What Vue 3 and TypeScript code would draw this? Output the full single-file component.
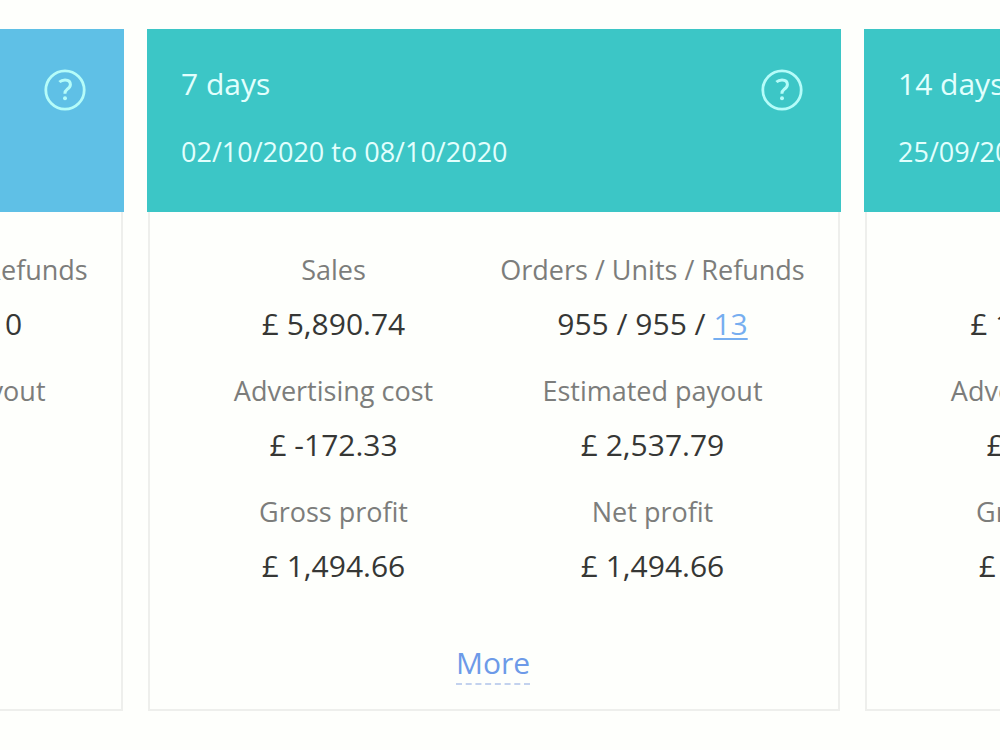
<script setup lang="ts">
interface Metric {
  label: string
  value: string
  linked?: string
}

interface PeriodCard {
  title: string
  range: string
  tone: 'sky' | 'teal'
  metrics: Metric[]
}

const cards: PeriodCard[] = [
  {
    title: 'Yesterday',
    range: '08/10/2020',
    tone: 'sky',
    metrics: [
      { label: 'Sales', value: '£ 841.53' },
      { label: 'Orders / Units / Refunds', value: '136 / 136 / 0' },
      { label: 'Advertising cost', value: '£ -24.61' },
      { label: 'Estimated payout', value: '£ 362.54' },
      { label: 'Gross profit', value: '£ 213.52' },
      { label: 'Net profit', value: '£ 213.52' },
    ],
  },
  {
    title: '7 days',
    range: '02/10/2020 to 08/10/2020',
    tone: 'teal',
    metrics: [
      { label: 'Sales', value: '£ 5,890.74' },
      { label: 'Orders / Units / Refunds', value: '955 / 955 / ', linked: '13' },
      { label: 'Advertising cost', value: '£ -172.33' },
      { label: 'Estimated payout', value: '£ 2,537.79' },
      { label: 'Gross profit', value: '£ 1,494.66' },
      { label: 'Net profit', value: '£ 1,494.66' },
    ],
  },
  {
    title: '14 days',
    range: '25/09/2020 to 08/10/2020',
    tone: 'teal',
    metrics: [
      { label: 'Sales', value: '£ 11,781.48' },
      { label: 'Orders / Units / Refunds', value: '1910 / 1910 / ', linked: '26' },
      { label: 'Advertising cost', value: '£ -344.66' },
      { label: 'Estimated payout', value: '£ 5,075.58' },
      { label: 'Gross profit', value: '£ 2,989.32' },
      { label: 'Net profit', value: '£ 2,989.32' },
    ],
  },
]
</script>

<template>
  <main class="strip">
    <article v-for="card in cards" :key="card.title" class="card">
      <header class="head" :class="card.tone">
        <div class="heading">
          <h2 class="title">{{ card.title }}</h2>
          <p class="range">{{ card.range }}</p>
        </div>
        <button class="help" type="button" :aria-label="'Help: ' + card.title">
          <svg viewBox="0 0 42 42" width="42" height="42" fill="none" aria-hidden="true">
            <circle cx="21" cy="21" r="19.2" stroke="currentColor" stroke-width="2.8" />
            <path
              d="M15.4 13C17 11.5 18.9 10.9 21 10.9C24.4 10.9 26.4 12.6 26.4 15.4C26.4 17.7 25.2 18.8 23.2 20.2C21.4 21.5 20.9 22.4 20.9 24.8"
              stroke="currentColor"
              stroke-width="3"
            />
            <circle cx="21" cy="29.2" r="2" fill="currentColor" />
          </svg>
        </button>
      </header>
      <div class="body">
        <dl class="metrics">
          <div v-for="metric in card.metrics" :key="metric.label" class="metric">
            <dt class="label">{{ metric.label }}</dt>
            <dd class="value">{{ metric.value }}<a v-if="metric.linked" class="count" href="#refunds">{{ metric.linked }}</a></dd>
          </div>
        </dl>
        <a class="more" href="#more">More</a>
      </div>
    </article>
  </main>
</template>

<style>
body {
  margin: 0;
  background: #fefffc;
}
</style>

<style scoped>
.strip {
  display: flex;
  justify-content: center;
  gap: 23px;
  padding: 29px 12px 24px 0;
  overflow: hidden;
  font-family: "Open Sans", "Noto Sans", sans-serif;
}

.card {
  flex: 0 0 calc(100% - 294px);
  min-width: 0;
}

.head {
  display: flex;
  justify-content: space-between;
  align-items: flex-start;
  padding: 35px 38px 40px 34px;
  color: #e2fffd;
}

.sky {
  background: #5fc0e6;
}

.teal {
  background: #3cc6c6;
}

.heading {
  display: grid;
  gap: 28px;
}

.title,
.range {
  margin: 0;
  font-weight: 400;
  line-height: 40px;
  white-space: nowrap;
}

.title {
  font-size: 30px;
}

.range {
  font-size: 27px;
}

.help {
  display: flex;
  margin: 5px 0 0;
  padding: 0;
  border: 0;
  background: none;
  color: #b5fcf9;
  cursor: pointer;
}

.body {
  display: flex;
  flex-direction: column;
  align-items: center;
  margin: 0 1px;
  padding: 38px 26px 24px 24px;
  border: 2px solid #eeefec;
  border-top: 0;
}

.metrics {
  display: grid;
  grid-template-columns: 1fr 1fr;
  row-gap: 27px;
  width: 100%;
  margin: 0 0 57px;
}

.metric {
  display: grid;
  gap: 14px;
  text-align: center;
}

.label,
.value {
  margin: 0;
  line-height: 40px;
  white-space: nowrap;
}

.label {
  color: #7c7d7b;
  font-size: 27px;
}

.value {
  color: #363735;
  font-size: 30px;
}

.count {
  color: #76aef0;
  text-decoration: underline;
  text-decoration-thickness: 2px;
  text-underline-offset: 3px;
}

.more {
  border-bottom: 2px dashed #c3d2ee;
  color: #6d9ae8;
  font-size: 30px;
  line-height: 40px;
  text-decoration: none;
}
</style>
